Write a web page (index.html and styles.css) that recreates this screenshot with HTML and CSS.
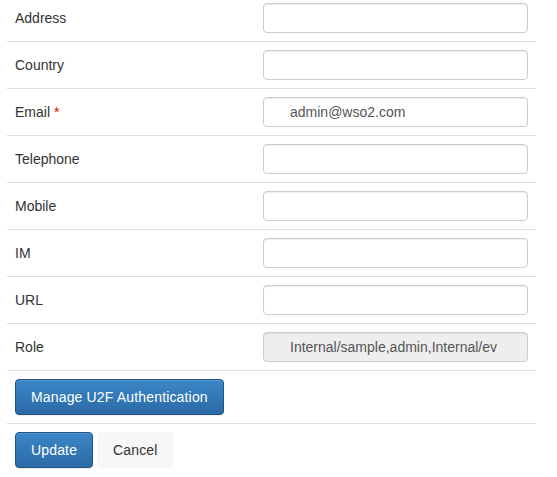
FILE: index.html
```html
<!DOCTYPE html>
<html>
<head>
<meta charset="utf-8">
<link rel="stylesheet" href="styles.css">
</head>
<body>
<div class="wrap">
  <table class="form-table">
    <tr><td class="lbl">Address</td><td class="fld"><input class="inp" type="text"></td></tr>
    <tr><td class="lbl">Country</td><td class="fld"><input class="inp" type="text"></td></tr>
    <tr><td class="lbl">Email <span class="req">*</span></td><td class="fld"><input class="inp" type="text" value="admin@wso2.com"></td></tr>
    <tr><td class="lbl">Telephone</td><td class="fld"><input class="inp" type="text"></td></tr>
    <tr><td class="lbl">Mobile</td><td class="fld"><input class="inp" type="text"></td></tr>
    <tr><td class="lbl">IM</td><td class="fld"><input class="inp" type="text"></td></tr>
    <tr><td class="lbl">URL</td><td class="fld"><input class="inp" type="text"></td></tr>
    <tr><td class="lbl">Role</td><td class="fld"><input class="inp inp-disabled" type="text" value="Internal/sample,admin,Internal/everyone" disabled></td></tr>
    <tr><td class="btn-cell" colspan="2"><button class="btn btn-primary">Manage U2F Authentication</button></td></tr>
    <tr><td class="btn-cell" colspan="2"><button class="btn btn-primary">Update</button> <button class="btn btn-default">Cancel</button></td></tr>
  </table>
</div>
</body>
</html>
```
FILE: styles.css
```css
html, body {
  margin: 0;
  padding: 0;
  background: #fff;
}
body {
  font-family: "Liberation Sans", Arial, sans-serif;
  font-size: 14px;
  color: #333;
}
.wrap {
  padding-left: 7px;
  margin-top: -6px;
}
.form-table {
  width: 529px;
  border-collapse: collapse;
  border-spacing: 0;
}
.form-table td {
  border-top: 1px solid #ddd;
  padding: 8px;
  vertical-align: middle;
  line-height: 20px;
}
.lbl {
  width: 232px;
}
.fld {
  padding-right: 8px;
}
.req {
  color: #e00;
}
.inp {
  display: block;
  box-sizing: border-box;
  width: 265px;
  height: 30px;
  margin: 0;
  padding: 0 30px 0 26px;
  border: 1px solid #ccc;
  border-radius: 4px;
  background: #fff;
  font-family: "Liberation Sans", Arial, sans-serif;
  font-size: 14px;
  color: #555;
  box-shadow: inset 0 1px 1px rgba(0,0,0,0.075);
  outline: none;
}
.inp-disabled {
  background: #eee;
  color: #555;
  -webkit-text-fill-color: #555;
  opacity: 1;
}
.btn-cell {
  padding: 8px;
}
.btn {
  display: inline-block;
  box-sizing: border-box;
  height: 36px;
  margin: 0;
  padding: 0 15px;
  font-family: "Liberation Sans", Arial, sans-serif;
  font-size: 14px;
  line-height: 20px;
  letter-spacing: 0.16px;
  border-radius: 4px;
  cursor: pointer;
  vertical-align: middle;
}
.btn-primary {
  color: #fff;
  border: 1px solid #245580;
  background-image: linear-gradient(to bottom, #3c87c8 0, #2b6aa6 100%);
  box-shadow: inset 0 1px 0 rgba(255,255,255,0.15), 0 1px 1px rgba(0,0,0,0.075);
}
.btn-default {
  color: #333;
  border: 1px solid #f7f7f7;
  background: #f7f7f7;
  margin-left: 0;
}
```
